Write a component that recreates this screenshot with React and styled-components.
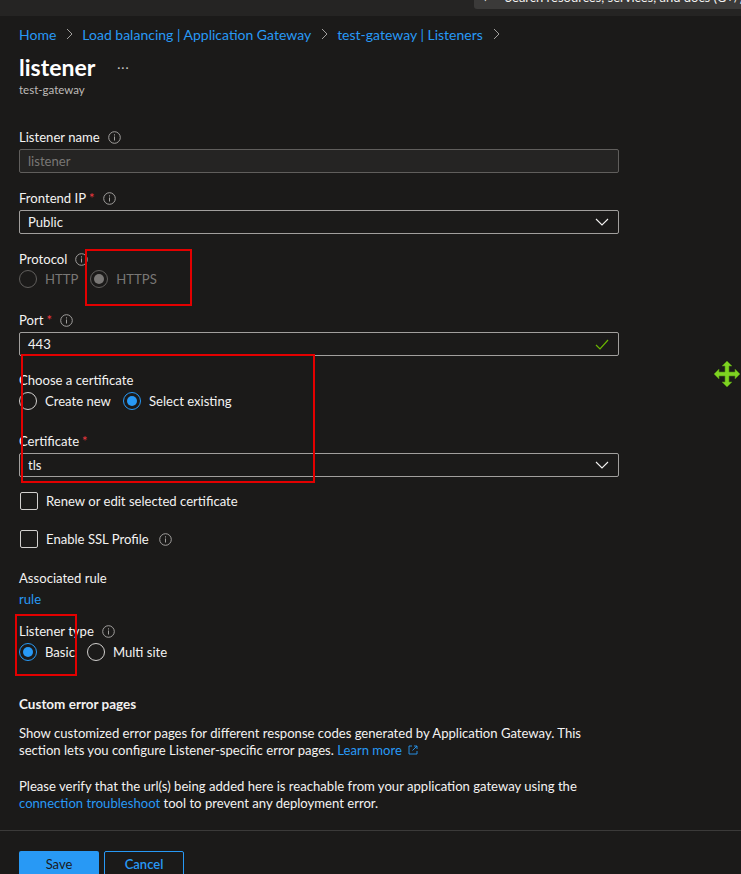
import React from "react";
import styled, { createGlobalStyle } from "styled-components";

const GlobalStyle = createGlobalStyle`
  html, body {
    margin: 0;
    padding: 0;
    background: #1b1a19;
  }
  body {
    font-family: Lato, "Noto Sans", sans-serif;
    color: #f3f2f1;
    font-size: 13.1px;
  }
`;

const InfoIcon = () => (
  <svg width="13" height="13" viewBox="0 0 13 13">
    <circle cx="6.5" cy="6.5" r="5.8" fill="none" stroke="#a19f9d" strokeWidth="1" />
    <rect x="6" y="5.5" width="1" height="4" fill="#a19f9d" />
    <rect x="6" y="3.3" width="1" height="1.2" fill="#a19f9d" />
  </svg>
);

const Chevron = () => (
  <svg width="14" height="8" viewBox="0 0 14 8">
    <path d="M1 1 L7 7 L13 1" fill="none" stroke="#f3f2f1" strokeWidth="1.1" />
  </svg>
);

const Check = () => (
  <svg width="14" height="11" viewBox="0 0 14 11">
    <path d="M1 6 L5 10 L13 1" fill="none" stroke="#6bb700" strokeWidth="1.2" />
  </svg>
);

const Crumb = () => (
  <svg width="8" height="12" viewBox="0 0 8 12">
    <path d="M2 1 L7 6 L2 11" fill="none" stroke="#a19f9d" strokeWidth="1" />
  </svg>
);

const MoveCursor = () => (
  <svg width="28" height="28" viewBox="0 0 28 28">
    <path
      d="M14 1 L19 6 L16 6 L16 12 L22 12 L22 9 L27 14 L22 19 L22 16 L16 16 L16 22 L19 22 L14 27 L9 22 L12 22 L12 16 L6 16 L6 19 L1 14 L6 9 L6 12 L12 12 L12 6 L9 6 Z"
      fill="#7ed321"
      stroke="#4f8a10"
      strokeWidth="0.6"
    />
  </svg>
);

const App = () => {
  return (
    <>
      <GlobalStyle />
      <Screen>
        <TopBar>
          <Search>
            <SearchText>
              <span>›</span> Search resources, services, and docs (G+/)
            </SearchText>
          </Search>
        </TopBar>
        <Content>
          <Breadcrumbs>
            <CrumbLink>Home</CrumbLink>
            <Crumb />
            <CrumbLink>Load balancing | Application Gateway</CrumbLink>
            <Crumb />
            <CrumbLink>test-gateway | Listeners</CrumbLink>
            <Crumb />
          </Breadcrumbs>
          <TitleRow>
            <Title>listener</Title>
            <More>···</More>
          </TitleRow>
          <Subtitle>test-gateway</Subtitle>

          <Label $top={30}>
            Listener name <InfoIcon />
          </Label>
          <Input $disabled>listener</Input>

          <Label $top={16}>
            Frontend IP <Star>*</Star> <InfoIcon />
          </Label>
          <Input $select>
            Public
            <Chevron />
          </Input>

          <Label $top={16} $bottom={2}>
            Protocol <InfoIcon />
          </Label>
          <RadioRow>
            <RadioItem>
              <Radio $disabled />
              <RadioText $disabled>HTTP</RadioText>
            </RadioItem>
            <RadioItem>
              <Radio $disabled $checked />
              <RadioText $disabled>HTTPS</RadioText>
            </RadioItem>
          </RadioRow>

          <Label $top={23}>
            Port <Star>*</Star> <InfoIcon />
          </Label>
          <Input $select>
            443
            <Check />
          </Input>

          <Label $top={15}>Choose a certificate</Label>
          <RadioRow>
            <RadioItem>
              <Radio />
              <RadioText>Create new</RadioText>
            </RadioItem>
            <RadioItem>
              <Radio $checked />
              <RadioText>Select existing</RadioText>
            </RadioItem>
          </RadioRow>

          <Label $top={22}>
            Certificate <Star>*</Star>
          </Label>
          <Input $select>
            tls
            <Chevron />
          </Input>

          <CheckRow $top={15}>
            <Box />
            Renew or edit selected certificate
          </CheckRow>
          <CheckRow $top={20}>
            <Box />
            Enable SSL Profile <InfoIcon />
          </CheckRow>

          <Label $top={21}>Associated rule</Label>
          <Link>rule</Link>

          <Label $top={14}>
            Listener type <InfoIcon />
          </Label>
          <RadioRow>
            <RadioItem>
              <Radio $checked />
              <RadioText>Basic</RadioText>
            </RadioItem>
            <RadioItem>
              <Radio />
              <RadioText>Multi site</RadioText>
            </RadioItem>
          </RadioRow>

          <SectionTitle>Custom error pages</SectionTitle>
          <Paragraph>
            Show customized error pages for different response codes generated by Application Gateway. This
            section lets you configure Listener-specific error pages.{" "}
            <InlineLink>
              Learn more
              <ExternalIcon width="12" height="12" viewBox="0 0 12 12">
                <path d="M5 2 H2 V10 H10 V7 M7 2 H10 V5 M10 2 L5.5 6.5" fill="none" stroke="#2899f5" strokeWidth="0.9" />
              </ExternalIcon>
            </InlineLink>
          </Paragraph>
          <Paragraph $top={19}>
            Please verify that the url(s) being added here is reachable from your application gateway using the{" "}
            <InlineLink>connection troubleshoot</InlineLink> tool to prevent any deployment error.
          </Paragraph>
        </Content>
        <Footer>
          <PrimaryButton>Save</PrimaryButton>
          <SecondaryButton>Cancel</SecondaryButton>
        </Footer>

        <Annotation style={{ left: 85, top: 249, width: 107, height: 57 }} />
        <Annotation style={{ left: 21, top: 354, width: 294, height: 129 }} />
        <Annotation style={{ left: 15, top: 614, width: 62, height: 62 }} />
        <CursorMark>
          <MoveCursor />
        </CursorMark>
      </Screen>
    </>
  );
};

const Screen = styled.div`
  position: relative;
  width: 741px;
  height: 874px;
  overflow: hidden;
  background: #1b1a19;
`;

const TopBar = styled.div`
  height: 16px;
  background: #252423;
  display: flex;
  justify-content: flex-end;
`;

const Search = styled.div`
  width: 267px;
  height: 9px;
  background: #3b3a39;
  border-radius: 0 0 0 3px;
  overflow: hidden;
  padding-left: 10px;
  box-sizing: border-box;
`;

const SearchText = styled.div`
  color: #f3f2f1;
  font-size: 13px;
  line-height: 14px;
  margin-top: -10px;
  white-space: nowrap;
  span {
    margin-right: 14px;
  }
`;

const Content = styled.div`
  padding: 0 19px;
  width: 600px;
`;

const Breadcrumbs = styled.div`
  display: flex;
  align-items: center;
  gap: 9px;
  height: 20px;
  margin-top: 8px;
  font-size: 14px;
`;

const CrumbLink = styled.span`
  color: #2899f5;
`;

const TitleRow = styled.div`
  display: flex;
  align-items: center;
  margin-top: 8px;
  height: 30px;
`;

const Title = styled.h1`
  margin: 0;
  font-size: 23px;
  font-weight: 700;
  color: #ffffff;
`;

const More = styled.span`
  margin-left: 22px;
  color: #c8c6c4;
  font-size: 12px;
  letter-spacing: 1px;
`;

const Subtitle = styled.div`
  font-size: 11.5px;
  color: #bebbb8;
  line-height: 16px;
`;

const Label = styled.div`
  display: flex;
  align-items: center;
  gap: 5px;
  height: 18px;
  margin-top: ${(p) => p.$top || 0}px;
  margin-bottom: ${(p) => (p.$bottom !== undefined ? p.$bottom : 3)}px;
  color: #f3f2f1;
  svg {
    margin-left: 3px;
  }
`;

const Star = styled.span`
  color: #f1383f;
  margin-left: -2px;
`;

const Input = styled.div`
  box-sizing: border-box;
  height: 24px;
  width: 600px;
  border: 1px solid ${(p) => (p.$disabled ? "#605e5c" : "#a19f9d")};
  background: ${(p) => (p.$disabled ? "#252423" : "#1b1a19")};
  color: ${(p) => (p.$disabled ? "#797775" : "#f3f2f1")};
  border-radius: 2px;
  display: flex;
  align-items: center;
  justify-content: space-between;
  padding: 0 9px 0 8px;
`;

const RadioRow = styled.div`
  display: flex;
  gap: 12px;
  height: 18px;
  align-items: center;
`;

const RadioItem = styled.div`
  display: flex;
  align-items: center;
  gap: 8px;
`;

const Radio = styled.span`
  box-sizing: border-box;
  width: 18px;
  height: 18px;
  border-radius: 50%;
  border: 1px solid
    ${(p) => (p.$disabled ? "#605e5c" : p.$checked ? "#2899f5" : "#d2d0ce")};
  display: flex;
  align-items: center;
  justify-content: center;
  &::after {
    content: "";
    display: ${(p) => (p.$checked ? "block" : "none")};
    width: 10px;
    height: 10px;
    border-radius: 50%;
    background: ${(p) => (p.$disabled ? "#797775" : "#2899f5")};
  }
`;

const RadioText = styled.span`
  color: ${(p) => (p.$disabled ? "#797775" : "#f3f2f1")};
`;

const CheckRow = styled.div`
  display: flex;
  align-items: center;
  gap: 8px;
  height: 18px;
  margin-top: ${(p) => p.$top}px;
  svg {
    margin-left: 2px;
  }
`;

const Box = styled.span`
  box-sizing: border-box;
  width: 18px;
  height: 18px;
  border: 1px solid #d2d0ce;
  border-radius: 2px;
  margin-left: 1px;
`;

const Link = styled.div`
  color: #2899f5;
  line-height: 18px;
  margin-top: 3px;
`;

const InlineLink = styled.span`
  color: #2899f5;
  white-space: nowrap;
`;

const ExternalIcon = styled.svg`
  margin-left: 5px;
  vertical-align: -1px;
`;

const SectionTitle = styled.div`
  font-weight: 700;
  font-size: 13.5px;
  height: 18px;
  margin-top: 35px;
`;

const Paragraph = styled.p`
  margin: ${(p) => p.$top || 11}px 0 0;
  line-height: 17px;
  width: 580px;
`;

const Footer = styled.div`
  margin-top: 18px;
  border-top: 1px solid #3b3a39;
  padding: 20px 19px 0;
  display: flex;
  gap: 5px;
`;

const PrimaryButton = styled.button`
  width: 80px;
  height: 26px;
  border: none;
  border-radius: 2px;
  background: #2899f5;
  color: #1b1a19;
  font-family: inherit;
  font-size: 13px;
`;

const SecondaryButton = styled.button`
  width: 80px;
  height: 26px;
  border: 1px solid #2899f5;
  border-radius: 2px;
  background: transparent;
  color: #2899f5;
  font-family: inherit;
  font-size: 13px;
  font-weight: 600;
`;

const Annotation = styled.div`
  position: absolute;
  box-sizing: border-box;
  border: 2px solid #e30000;
  pointer-events: none;
`;

const CursorMark = styled.div`
  position: absolute;
  left: 713px;
  top: 360px;
`;

export default App;
